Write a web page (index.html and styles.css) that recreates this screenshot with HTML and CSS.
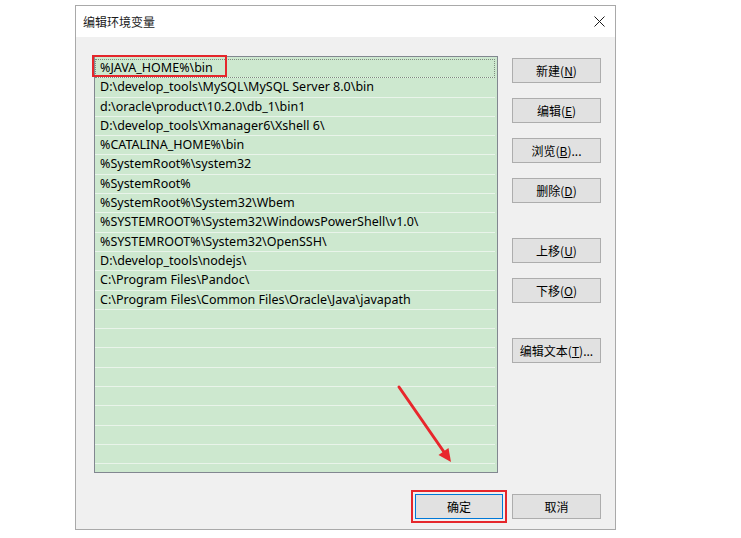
FILE: index.html
```html
<!DOCTYPE html>
<html lang="zh-CN">
<head>
    <meta charset="UTF-8">
    <title>编辑环境变量</title>
    <link rel="stylesheet" href="styles.css">
</head>
<body>
    <div class="dialog">
        <div class="titlebar">
            <span class="title">编辑环境变量</span>
            <svg class="close" width="11" height="11" viewBox="0 0 11 11">
                <path d="M0.5 0.5 L10.5 10.5 M10.5 0.5 L0.5 10.5" stroke="#1a1a1a" stroke-width="1" fill="none"/>
            </svg>
        </div>

        <div class="content">
            <div class="main">
                <div class="list">
                    <div class="row focus">%JAVA_HOME%\bin</div>
                    <div class="row">D:\develop_tools\MySQL\MySQL Server 8.0\bin</div>
                    <div class="row">d:\oracle\product\10.2.0\db_1\bin1</div>
                    <div class="row">D:\develop_tools\Xmanager6\Xshell 6\</div>
                    <div class="row">%CATALINA_HOME%\bin</div>
                    <div class="row">%SystemRoot%\system32</div>
                    <div class="row">%SystemRoot%</div>
                    <div class="row">%SystemRoot%\System32\Wbem</div>
                    <div class="row">%SYSTEMROOT%\System32\WindowsPowerShell\v1.0\</div>
                    <div class="row">%SYSTEMROOT%\System32\OpenSSH\</div>
                    <div class="row">D:\develop_tools\nodejs\</div>
                    <div class="row">C:\Program Files\Pandoc\</div>
                    <div class="row">C:\Program Files\Common Files\Oracle\Java\javapath</div>
                    <div class="row"></div>
                    <div class="row"></div>
                    <div class="row"></div>
                    <div class="row"></div>
                    <div class="row"></div>
                    <div class="row"></div>
                    <div class="row"></div>
                    <div class="row"></div>
                    <div class="row"></div>
                </div>
                <!-- 红框标注 -->
                <div class="mark"></div>

                <div class="side">
                    <button>新建(<u>N</u>)</button>
                    <button>编辑(<u>E</u>)</button>
                    <button>浏览(<u>B</u>)...</button>
                    <button>删除(<u>D</u>)</button>
                    <button class="gap">上移(<u>U</u>)</button>
                    <button>下移(<u>O</u>)</button>
                    <button class="gap">编辑文本(<u>T</u>)...</button>
                </div>
            </div>

            <div class="footer">
                <button class="ok">确定</button>
                <button>取消</button>
            </div>
        </div>
    </div>

    <!-- 红色箭头标注 -->
    <svg class="arrow" width="741" height="538" viewBox="0 0 741 538">
        <line x1="399" y1="387" x2="444" y2="452" stroke="#e8272c" stroke-width="3" stroke-linecap="round"/>
        <polygon points="451,462 438.5,455 448.5,448" fill="#e8272c"/>
    </svg>
</body>
</html>
```

FILE: styles.css
```css
* {
    margin: 0;
    padding: 0;
    box-sizing: border-box;
}

body {
    font-family: "Noto Sans", "Noto Sans CJK SC", sans-serif;
    font-size: 12.5px;
    color: #000000;
    background-color: #ffffff;
    position: relative;
    width: 741px;
    height: 538px;
    overflow: hidden;
    padding: 5px 0 0 75px;
}

.dialog {
    width: 541px;
    height: 525px;
    border: 1px solid #a9a9a9;
    background-color: #f0f0f0;
}

.titlebar {
    height: 31px;
    background-color: #ffffff;
    display: flex;
    align-items: center;
    justify-content: space-between;
    padding: 0 10px 0 7px;
}

.title {
    font-family: "Noto Sans CJK SC", sans-serif;
    font-size: 12px;
    color: #1a1a1a;
}

.content {
    padding: 19px 14px 0 18px;
}

.main {
    position: relative;
    display: flex;
    gap: 14px;
}

.list {
    width: 404px;
    height: 417px;
    border: 1px solid #828790;
    background-color: #cde8cf;
    padding: 2px 2px 0 0;
    overflow: hidden;
}

.row {
    height: 19.3px;
    line-height: 18.3px;
    border-bottom: 1px solid #e9f4ea;
    padding-left: 5px;
    white-space: nowrap;
}

.row.focus {
    outline: 1px dotted #7d8c7e;
    outline-offset: -1px;
}

.mark {
    position: absolute;
    left: -2px;
    top: -1px;
    width: 135px;
    height: 22px;
    border: 2px solid #e5262b;
}

.side {
    width: 89px;
    padding-top: 2px;
    display: flex;
    flex-direction: column;
    gap: 15px;
}

.side .gap {
    margin-top: 20px;
}

button {
    height: 25px;
    border: 1px solid #adadad;
    background-color: #e1e1e1;
    font-family: "Noto Sans CJK SC", sans-serif;
    font-size: 12px;
    color: #000000;
}

.footer {
    display: flex;
    justify-content: flex-end;
    gap: 9px;
    margin-top: 21px;
}

.footer button {
    width: 89px;
}

.footer .ok {
    width: 88px;
    border: 1px solid #0078d7;
    outline: 2px solid #e5262b;
    outline-offset: 2px;
}

.arrow {
    position: absolute;
    left: 0;
    top: 0;
    pointer-events: none;
}
```
